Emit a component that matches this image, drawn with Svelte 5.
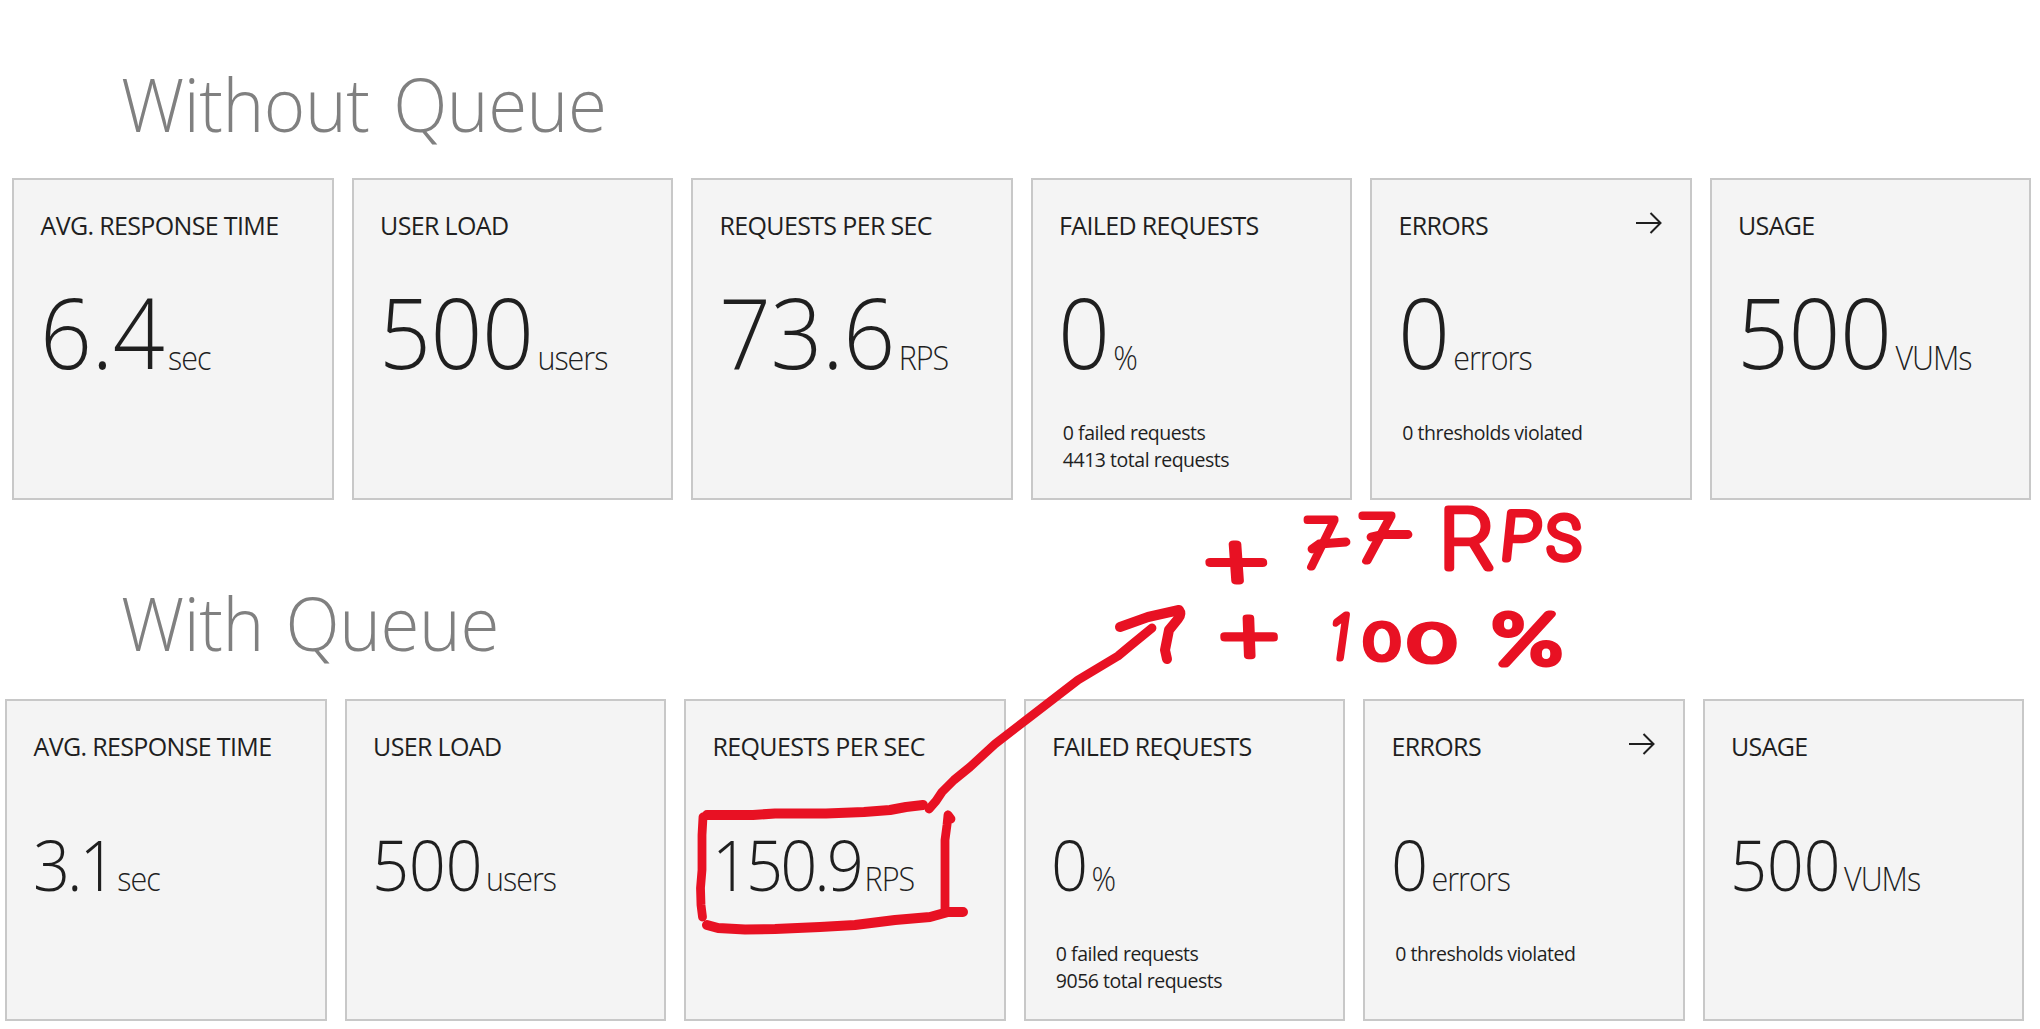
<script>
  const runs = [
    {
      title: 'Without Queue',
      kind: 'before',
      tiles: [
        { label: 'AVG. RESPONSE TIME', value: '6.4', unit: 'sec' },
        { label: 'USER LOAD', value: '500', unit: 'users' },
        { label: 'REQUESTS PER SEC', value: '73.6', unit: 'RPS' },
        { label: 'FAILED REQUESTS', value: '0', unit: '%', details: ['0 failed requests', '4413 total requests'] },
        { label: 'ERRORS', value: '0', unit: 'errors', details: ['0 thresholds violated'], link: true },
        { label: 'USAGE', value: '500', unit: 'VUMs' }
      ]
    },
    {
      title: 'With Queue',
      kind: 'after',
      tiles: [
        { label: 'AVG. RESPONSE TIME', value: '3.1', unit: 'sec', tight: true },
        { label: 'USER LOAD', value: '500', unit: 'users' },
        { label: 'REQUESTS PER SEC', value: '150.9', unit: 'RPS', tight: true },
        { label: 'FAILED REQUESTS', value: '0', unit: '%', details: ['0 failed requests', '9056 total requests'] },
        { label: 'ERRORS', value: '0', unit: 'errors', details: ['0 thresholds violated'], link: true },
        { label: 'USAGE', value: '500', unit: 'VUMs' }
      ]
    }
  ];

  // Handwritten note: each character is centred on x, sits on y, and is stretched and tilted a little.
  const note = [
    { ch: '+', x: 1238, y: 588, size: 90, stretch: 1.4, tilt: -4 },
    { ch: '7', x: 1321, y: 567, size: 66, stretch: 1, tilt: 0 },
    { ch: '7', x: 1377, y: 561, size: 63, stretch: 1.1, tilt: 0 },
    { ch: 'R', x: 1466, y: 568, size: 81, stretch: 1.12, tilt: 0 },
    { ch: 'P', x: 1519, y: 559, size: 64, stretch: 1.08, tilt: 6 },
    { ch: 'S', x: 1564, y: 559, size: 58, stretch: 1.05, tilt: 0 },
    { ch: '+', x: 1250, y: 663, size: 92, stretch: 1.28, tilt: -2 },
    { ch: '1', x: 1337, y: 658, size: 59, stretch: 0.9, tilt: 8 },
    { ch: '0', x: 1382, y: 659, size: 47, stretch: 1.36, tilt: 0 },
    { ch: '0', x: 1432, y: 661, size: 49, stretch: 1.72, tilt: 0 },
    { ch: '%', x: 1527, y: 664, size: 68, stretch: 1.35, tilt: 0 }
  ];
</script>

<main>
  {#each runs as run}
    <section class={run.kind}>
      <h1>{run.title}</h1>
      <div class="tiles">
        {#each run.tiles as tile}
          <article>
            <header>
              <h2>{tile.label}</h2>
              {#if tile.link}
                <svg class="arrow" viewBox="0 0 26 22" aria-hidden="true">
                  <path d="M0 11H24.5M14.5 1L24.5 11L14.5 21" />
                </svg>
              {/if}
            </header>
            <p class="reading"><span class="value" class:tight={tile.tight}>{tile.value}</span><span class="unit">{tile.unit}</span></p>
            {#if tile.details}
              <div class="details">
                {#each tile.details as line}<p>{line}</p>{/each}
              </div>
            {/if}
          </article>
        {/each}
      </div>
    </section>
  {/each}

  <svg class="ink" viewBox="0 0 2040 1029">
    <g class="marks">
      <path d="M707 815L753 815L775 813.500L826 813.500L864 812L890 810L906 807L923 805" />
      <path class="thin" d="M703 817L702 835L702 870L700.500 888L701 905L702.500 917" />
      <path d="M707 925L718 928L745 929.500L775 929L820 927L855 925L895 920L930 917L948 912L963 912" />
      <path class="thin" d="M948 815L947 825L945 840L945 912M948 815L951 819" />
      <path class="thin" d="M929 809L936 801L942 792L954 780L970 767L995 744L1030 717L1078 680L1118 656L1130 646L1152 628" />
      <path d="M1120 627L1148 617L1179 610Q1182 614 1178 619L1169 630L1165 650L1167 659" />
      <path class="thin" d="M1312 549L1319 544L1346 542M1371 537L1382 534.500L1408 534.500" />
    </g>
    <g class="note">
      {#each note as { ch, x, y, size, stretch, tilt }}
        <text font-size={size} transform="translate({x} {y}) skewX({-tilt}) scale({stretch} 1)">{ch}</text>
      {/each}
    </g>
  </svg>
</main>

<style>
  :global(body) {
    background: #fff;
  }

  main {
    position: relative;
    width: 2040px;
    height: 1029px;
    overflow: hidden;
    font-family: 'Open Sans', 'Noto Sans', sans-serif;
    color: #1f1f1f;
  }

  h1,
  h2,
  p {
    margin: 0;
    font-weight: 400;
  }

  section {
    box-sizing: border-box;
  }

  .before {
    height: 521px;
    padding: 54px 0 0 12.400px;
  }

  .after {
    padding: 52px 0 0 5.400px;
  }

  h1 {
    width: 700px;
    height: 124px;
    margin-left: 109px;
    font-size: 73.500px;
    line-height: 100px;
    font-weight: 300;
    letter-spacing: -0.500px;
    word-spacing: 6px;
    color: #808080;
    transform: scaleX(0.964);
    transform-origin: left;
  }

  .after h1 {
    height: 126px;
    margin-left: 116px;
    word-spacing: 4px;
  }

  .tiles {
    display: flex;
    gap: 18.200px;
  }

  article {
    box-sizing: border-box;
    flex: none;
    width: 321.300px;
    height: 321.500px;
    padding: 30px 26.200px 0;
    border: 2px solid #c8c8c8;
    background: #f4f4f4;
  }

  header {
    display: flex;
    justify-content: space-between;
    height: 30px;
  }

  h2 {
    font-size: 25px;
    line-height: 30px;
    letter-spacing: -0.650px;
    white-space: nowrap;
  }

  .arrow {
    width: 26px;
    height: 22px;
    margin: 1.500px 1.500px 0 0;
    fill: none;
    stroke: #1f1f1f;
    stroke-width: 2;
  }

  .reading {
    display: flex;
    align-items: baseline;
    height: 100px;
    margin: 41px 0 0 -1px;
    line-height: 100px;
    font-weight: 300;
    white-space: nowrap;
    transform: scaleX(0.93);
    transform-origin: left;
  }

  .value {
    font-size: 98px;
    letter-spacing: -0.500px;
  }

  .unit {
    font-size: 32.800px;
    letter-spacing: -1.100px;
    margin-left: 4px;
  }

  .before .unit {
    transform: translateY(1px);
  }

  .details {
    margin-top: 38px;
    padding-left: 3.800px;
    font-size: 19.500px;
    line-height: 27px;
    letter-spacing: -0.480px;
  }

  .after .reading {
    margin-top: 53px;
  }

  .after .value {
    font-size: 70px;
    letter-spacing: -0.400px;
  }

  .after .value.tight {
    letter-spacing: -3.300px;
  }

  .after .details {
    margin-top: 26px;
  }

  .ink {
    position: absolute;
    inset: 0;
    width: 2040px;
    height: 1029px;
  }

  .marks {
    fill: none;
    stroke: #e81123;
    stroke-width: 10;
    stroke-linecap: round;
    stroke-linejoin: round;
  }

  .thin {
    stroke-width: 8.800;
  }

  .note {
    font-family: Inter, sans-serif;
    font-weight: 100;
    text-anchor: middle;
    fill: #e81123;
    stroke: #e81123;
    stroke-width: 7;
    stroke-linecap: round;
    stroke-linejoin: round;
  }
</style>
